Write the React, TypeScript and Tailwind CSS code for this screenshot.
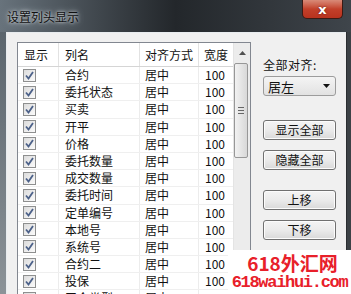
import React from "react";

const rows: string[] = [
  "合约",
  "委托状态",
  "买卖",
  "开平",
  "价格",
  "委托数量",
  "成交数量",
  "委托时间",
  "定单编号",
  "本地号",
  "系统号",
  "合约二",
  "投保",
  "平仓类型",
];

const font = { fontFamily: '"Noto Sans CJK SC", "Noto Sans", sans-serif' };

const CheckBox = () => (
  <span className="inline-flex w-[13px] h-[13px] border border-[#8e8f8f] bg-gradient-to-br from-[#dcdcdc] to-[#fbfbfb] items-center justify-center">
    <svg width="9" height="9" viewBox="0 0 9 9">
      <path d="M1 4.5 L3.5 7.5 L8 1" fill="none" stroke="#4c6189" strokeWidth="1.8" />
    </svg>
  </span>
);

const Btn = ({ label }: { label: string }) => (
  <button className="w-[73px] h-[20px] rounded-[3px] border border-[#707070] bg-gradient-to-b from-[#f4f4f4] via-[#ebebeb] to-[#d9d9d9] text-[12px] text-[#111] leading-none shadow-[inset_0_0_0_1px_#fcfcfc]">
    {label}
  </button>
);

export default function App() {
  return (
    <div
      className="w-[351px] h-[294px] overflow-hidden relative bg-[#2b3035] flex flex-col"
      style={font}
    >
      {/* title bar */}
      <div className="h-[32px] flex justify-between items-start bg-gradient-to-r from-[#68737c] via-[#23272b] to-[#3f454b] shrink-0">
        <span className="pl-[7px] pt-[8px] text-[12px] text-[#111] [text-shadow:0_0_6px_#c8d0d6,0_0_3px_#d8dde1]">
          设置列头显示
        </span>
        <div className="mr-[8px] w-[41px] h-[19px] rounded-b-[5px] border border-t-0 border-[#3b1a14] bg-gradient-to-b from-[#d88a78] via-[#c2402a] to-[#b8321e] flex items-center justify-center">
          <span className="text-white font-bold text-[13px] leading-none [text-shadow:0_0_2px_#5a1a10]" style={{ fontFamily: '"DejaVu Sans", sans-serif' }}>
            x
          </span>
        </div>
      </div>

      {/* body */}
      <div className="flex flex-1 min-h-0">
        <div className="w-[6px] bg-gradient-to-b from-[#5b656d] to-[#8c9398]" />
        <div className="flex-1 bg-[#f0f0f0] border-l border-t border-[#e8ecef] flex pl-[10px] pt-[9px] min-h-0">
          {/* list box */}
          <div className="w-[234px] border border-[#828790] bg-white flex min-h-0 h-[300px]">
            <div className="w-[215px] flex flex-col">
              <div className="h-[24px] flex border-b border-[#d5d5d5] text-[12px] text-[#111] shrink-0">
                <div className="w-[41px] pl-[6px] pt-[3px] border-r border-[#e2e2e2]">显示</div>
                <div className="w-[81px] pl-[6px] pt-[3px] border-r border-[#e2e2e2]">列名</div>
                <div className="w-[59px] pl-[5px] pt-[3px] border-r border-[#e2e2e2]">对齐方式</div>
                <div className="flex-1 pl-[5px] pt-[3px]">宽度</div>
              </div>
              {rows.map((r) => (
                <div key={r} className="h-[17.2px] flex border-b border-[#efefef] text-[12px] text-[#111] leading-[16px] shrink-0">
                  <div className="w-[41px] pl-[5px] flex items-center border-r border-[#ececec]">
                    <CheckBox />
                  </div>
                  <div className="w-[81px] pl-[6px] border-r border-[#ececec]">{r}</div>
                  <div className="w-[59px] pl-[5px] border-r border-[#ececec]">居中</div>
                  <div className="flex-1 pl-[6px]">100</div>
                </div>
              ))}
            </div>
            {/* scrollbar */}
            <div className="flex-1 bg-[#ececec] border-l border-[#e4e4e4] flex flex-col items-center">
              <div className="h-[20px] flex items-center justify-center">
                <svg width="7" height="4" viewBox="0 0 7 4">
                  <path d="M0 4 L3.5 0 L7 4 Z" fill="#505050" />
                </svg>
              </div>
              <div className="w-[14px] h-[95px] rounded-[2px] border border-[#979797] bg-gradient-to-r from-[#f2f2f2] to-[#d8d8d8] flex flex-col items-center justify-center gap-[2px] mr-[2px]">
                <span className="w-[6px] h-[1px] bg-[#666]" />
                <span className="w-[6px] h-[1px] bg-[#666]" />
                <span className="w-[6px] h-[1px] bg-[#666]" />
              </div>
            </div>
          </div>

          {/* right panel */}
          <div className="ml-[12px] flex flex-col">
            <span className="mt-[16px] text-[12px] text-[#111] leading-[14px] tracking-[0.5px]">全部对齐:</span>
            <div className="mt-[4px] w-[73px] h-[20px] rounded-[3px] border border-[#9c9c9c] bg-gradient-to-b from-[#f4f4f4] to-[#e2e2e2] flex items-center justify-between pl-[4px] pr-[5px]">
              <span className="text-[13px] text-[#111] leading-none">居左</span>
              <svg width="7" height="4" viewBox="0 0 7 4">
                <path d="M0 0 L7 0 L3.5 4 Z" fill="#111" />
              </svg>
            </div>
            <div className="mt-[24px] flex flex-col gap-[10px]">
              <Btn label="显示全部" />
              <Btn label="隐藏全部" />
            </div>
            <div className="mt-[20px] flex flex-col gap-[10px]">
              <Btn label="上移" />
              <Btn label="下移" />
            </div>
          </div>
        </div>
        <div className="w-[5px] bg-[#3c4146] border-l border-[#2a2d31]" />
      </div>

      {/* watermark overlay */}
      <div className="absolute right-0 bottom-0 w-[123px] h-[44px] bg-white flex flex-col items-center text-[#e8202a] font-bold">
        <span className="text-[19px] leading-[20px] mt-[3px] pl-[6px]">618外汇网</span>
        <span className="text-[17px] leading-[18px] tracking-[-1.3px] mt-[1px]" style={{ fontFamily: '"Liberation Mono", monospace' }}>
          618waihui.com
        </span>
      </div>
    </div>
  );
}
